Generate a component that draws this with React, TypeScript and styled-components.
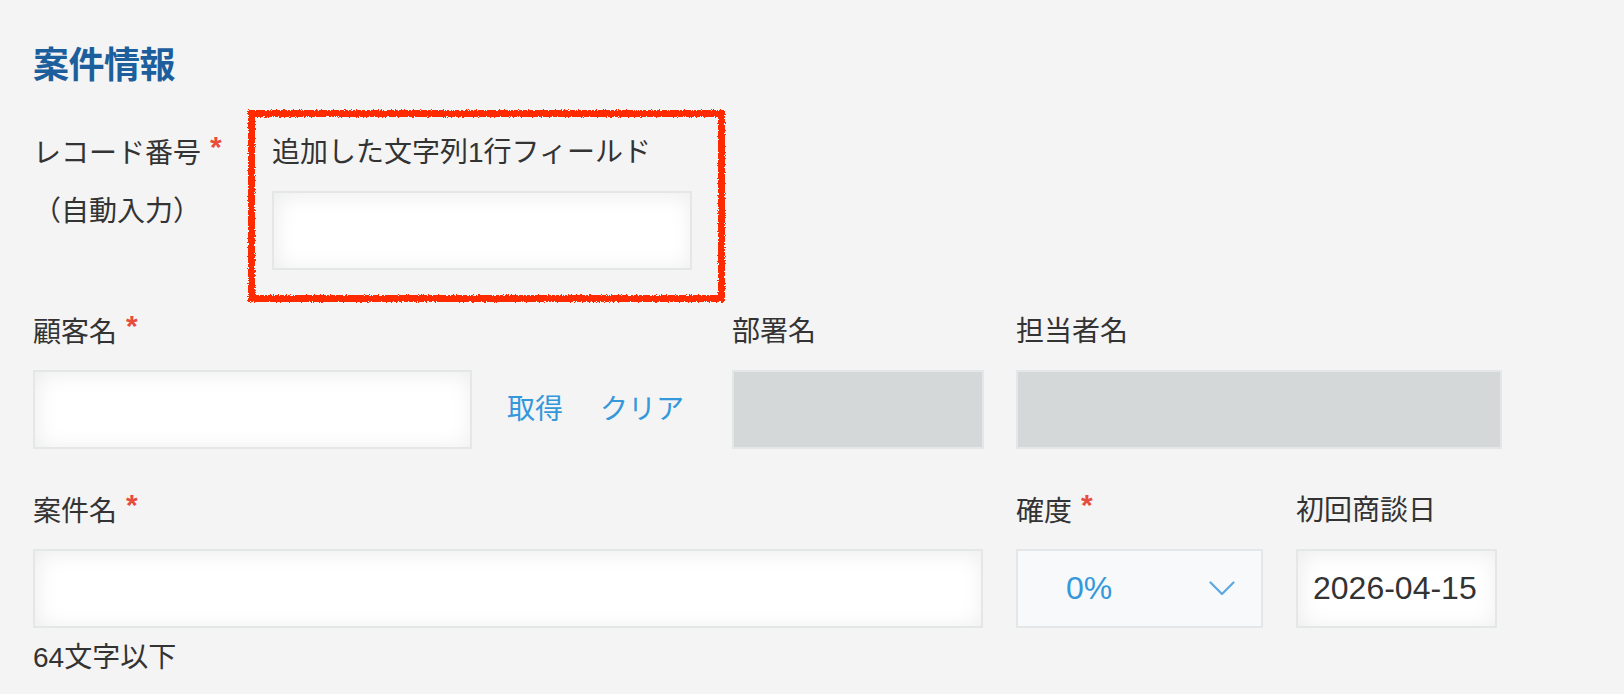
import React from "react";
import styled, { createGlobalStyle } from "styled-components";

const GlobalStyle = createGlobalStyle`
  html, body {
    margin: 0;
    padding: 0;
    background: #f4f4f4;
  }
  body {
    font-family: "Liberation Sans", "Noto Sans CJK JP", sans-serif;
    color: #333333;
  }
`;

const Page = styled.div`
  padding: 42px 0 0 33px;
  min-height: 694px;
  box-sizing: border-box;
`;

const Heading = styled.h2`
  margin: 0 0 43px 0;
  font-size: 36px;
  line-height: 48px;
  font-weight: 700;
  color: #1d5e9c;
  letter-spacing: -0.5px;
`;

const Rows = styled.div`
  display: flex;
  flex-direction: column;
  gap: 42px;
`;

const Row = styled.div<{ $gap: number }>`
  display: flex;
  align-items: flex-start;
  gap: ${(p) => p.$gap}px;
`;

const Field = styled.div<{ $w: number }>`
  position: relative;
  width: ${(p) => p.$w}px;
  display: flex;
  flex-direction: column;
`;

const Label = styled.div`
  font-size: 28px;
  line-height: 40px;
  height: 40px;
  margin-bottom: 18px;
  white-space: nowrap;
  color: #333333;
`;

const Required = styled.span`
  color: #e74c3c;
  font-weight: 700;
  font-size: 30px;
  margin-left: 9px;
  position: relative;
  top: -6px;
`;

const ValueText = styled.div`
  font-size: 28px;
  line-height: 40px;
  margin-top: 1px;
  white-space: nowrap;
`;

const TextBox = styled.div<{ $w?: number }>`
  box-sizing: border-box;
  width: ${(p) => (p.$w ? `${p.$w}px` : "100%")};
  height: 79px;
  background: #ffffff;
  border: 2px solid #e3e7e8;
  box-shadow: inset 2px 2px 22px #ececec;
  display: flex;
  align-items: center;
  padding: 0 15px;
  font-size: 32px;
  color: #333333;
  flex-shrink: 0;
`;

const DisabledBox = styled.div`
  box-sizing: border-box;
  width: 100%;
  height: 79px;
  background: #d4d8d9;
  border: 2px solid #e3e7e8;
`;

const SelectBox = styled.div`
  box-sizing: border-box;
  width: 100%;
  height: 79px;
  background: #f7f9fa;
  border: 2px solid #e3e7e8;
  display: flex;
  align-items: center;
  justify-content: space-between;
  padding: 0 26px 0 48px;
  font-size: 32px;
  color: #3498db;
`;

const InputLine = styled.div`
  display: flex;
  align-items: center;
`;

const Actions = styled.div`
  display: flex;
  align-items: center;
  gap: 37px;
  margin-left: 35px;
`;

const ActionButton = styled.button`
  background: none;
  border: none;
  padding: 0;
  margin: 0;
  font-family: inherit;
  font-size: 28px;
  line-height: 40px;
  color: #3498db;
  cursor: pointer;
`;

const Hint = styled.div`
  margin-top: 10px;
  font-size: 28px;
  line-height: 40px;
  color: #333333;
`;

const Annotation = styled.div`
  position: absolute;
  left: -24px;
  top: -23px;
  right: -33px;
  bottom: -32px;
  border: 7px solid #ff2a00;
  pointer-events: none;
  filter: url(#rough-edge);
`;

const HiddenSvg = styled.svg`
  position: absolute;
  width: 0;
  height: 0;
`;

const Chevron = () => (
  <svg width="26" height="15" viewBox="0 0 26 15" fill="none">
    <polyline
      points="1.5,1.5 13,13 24.5,1.5"
      stroke="#5aa8e4"
      strokeWidth="2.2"
      strokeLinecap="round"
      strokeLinejoin="round"
    />
  </svg>
);

export default function App() {
  return (
    <>
      <GlobalStyle />
      <HiddenSvg aria-hidden="true">
        <filter id="rough-edge" x="-5%" y="-5%" width="110%" height="110%">
          <feTurbulence type="fractalNoise" baseFrequency="1.4" numOctaves="2" seed="5" />
          <feDisplacementMap in="SourceGraphic" scale="4" xChannelSelector="R" yChannelSelector="G" />
        </filter>
      </HiddenSvg>
      <Page>
        <Heading>案件情報</Heading>
        <Rows>
          <Row $gap={32}>
            <Field $w={207}>
              <Label>
                レコード番号<Required>*</Required>
              </Label>
              <ValueText>（自動入力）</ValueText>
            </Field>
            <Field $w={420}>
              <Label>追加した文字列1行フィールド</Label>
              <TextBox />
              <Annotation />
            </Field>
          </Row>

          <Row $gap={32}>
            <Field $w={667}>
              <Label>
                顧客名<Required>*</Required>
              </Label>
              <InputLine>
                <TextBox $w={439} />
                <Actions>
                  <ActionButton>取得</ActionButton>
                  <ActionButton>クリア</ActionButton>
                </Actions>
              </InputLine>
            </Field>
            <Field $w={252}>
              <Label>部署名</Label>
              <DisabledBox />
            </Field>
            <Field $w={486}>
              <Label>担当者名</Label>
              <DisabledBox />
            </Field>
          </Row>

          <Row $gap={33}>
            <Field $w={950}>
              <Label>
                案件名<Required>*</Required>
              </Label>
              <TextBox />
              <Hint>64文字以下</Hint>
            </Field>
            <Field $w={247}>
              <Label>
                確度<Required>*</Required>
              </Label>
              <SelectBox>
                <span>0%</span>
                <Chevron />
              </SelectBox>
            </Field>
            <Field $w={201}>
              <Label>初回商談日</Label>
              <TextBox>2026-04-15</TextBox>
            </Field>
          </Row>
        </Rows>
      </Page>
    </>
  );
}
